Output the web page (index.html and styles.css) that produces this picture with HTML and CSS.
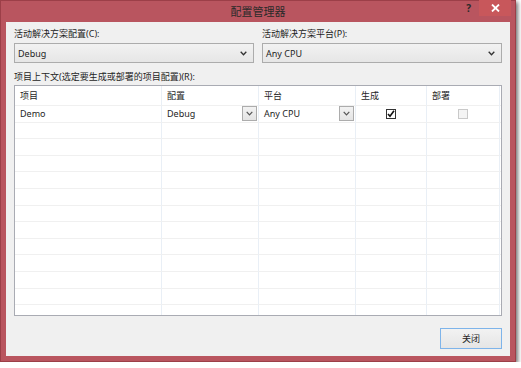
FILE: index.html
```html
<!DOCTYPE html>
<html lang="zh-CN">
<head>
    <meta charset="UTF-8">
    <title>配置管理器</title>
    <link rel="stylesheet" href="styles.css">
</head>
<body>
    <div class="window">
        <div class="titlebar">
            <span></span>
            <span class="title">配置管理器</span>
            <div class="caption-buttons">
                <span class="help">?</span>
                <span class="close">
                    <svg width="9" height="8" viewBox="0 0 9 8"><path d="M1 0.5 L8 7.5 M8 0.5 L1 7.5" stroke="#fff" stroke-width="1.8"/></svg>
                </span>
            </div>
        </div>
        <div class="content">
            <div class="combos">
                <div class="field">
                    <label>活动解决方案配置(C):</label>
                    <div class="combo">
                        <span>Debug</span>
                        <svg class="chevron" width="7" height="5" viewBox="0 0 7 5"><path d="M0.7 0.8 L3.5 3.8 L6.3 0.8" fill="none" stroke="#333" stroke-width="1.3"/></svg>
                    </div>
                </div>
                <div class="field">
                    <label>活动解决方案平台(P):</label>
                    <div class="combo">
                        <span>Any CPU</span>
                        <svg class="chevron" width="7" height="5" viewBox="0 0 7 5"><path d="M0.7 0.8 L3.5 3.8 L6.3 0.8" fill="none" stroke="#333" stroke-width="1.3"/></svg>
                    </div>
                </div>
            </div>
            <div class="grid-label">项目上下文(选定要生成或部署的项目配置)(R):</div>
            <div class="grid" id="grid">
                <div class="cell head">项目</div>
                <div class="cell head">配置</div>
                <div class="cell head">平台</div>
                <div class="cell head">生成</div>
                <div class="cell head">部署</div>
                <div class="cell head last"></div>

                <div class="cell">Demo</div>
                <div class="cell drop">
                    <span>Debug</span>
                    <span class="drop-btn"><svg width="7" height="5" viewBox="0 0 7 5"><path d="M0.7 0.8 L3.5 3.8 L6.3 0.8" fill="none" stroke="#555" stroke-width="1.2"/></svg></span>
                </div>
                <div class="cell drop">
                    <span>Any CPU</span>
                    <span class="drop-btn"><svg width="7" height="5" viewBox="0 0 7 5"><path d="M0.7 0.8 L3.5 3.8 L6.3 0.8" fill="none" stroke="#555" stroke-width="1.2"/></svg></span>
                </div>
                <div class="cell center">
                    <span class="check checked"><svg width="8" height="8" viewBox="0 0 8 8"><path d="M1 4 L3 6.3 L7 0.8" fill="none" stroke="#111" stroke-width="1.6"/></svg></span>
                </div>
                <div class="cell center"><span class="check disabled"></span></div>
                <div class="cell last"></div>
            </div>
            <div class="footer">
                <button class="btn">关闭</button>
            </div>
        </div>
    </div>

    <script>
        // empty rows below the project row
        const grid = document.getElementById('grid');
        for (let r = 0; r < 12; r++) {
            for (let c = 0; c < 6; c++) {
                const cell = document.createElement('div');
                cell.className = c === 5 ? 'cell last' : 'cell';
                grid.appendChild(cell);
            }
        }
    </script>
</body>
</html>
```

FILE: styles.css
```css
body {
    margin: 0;
    background: #fff;
    font-family: 'Noto Sans', 'Noto Sans CJK SC', sans-serif;
    font-size: 9px;
    color: #1e1e1e;
}
.window {
    width: 516px;
    height: 362px;
    box-sizing: border-box;
    background-color: #b9555f;
    border: 1px solid #9c3f48;
    padding: 0 5px 5px;
    display: flex;
    flex-direction: column;
    box-shadow: 2px 2px 4px rgba(0, 0, 0, 0.55);
}
.titlebar {
    height: 21px;
    display: grid;
    grid-template-columns: 1fr auto 1fr;
    align-items: start;
}
.title {
    font-size: 11px;
    line-height: 21px;
    color: #2a2a2a;
}
.caption-buttons {
    display: flex;
    justify-content: flex-end;
    align-items: center;
    margin-right: -1px;
    margin-top: -1px;
}
.help {
    font-size: 10px;
    font-weight: 700;
    color: #2a2a2a;
    margin-right: 8px;
    line-height: 16px;
}
.close {
    width: 32px;
    height: 16px;
    background-color: #c8575b;
    display: flex;
    align-items: center;
    justify-content: center;
}
.content {
    flex: 1;
    background-color: #f0f0f0;
    padding: 6px 8px 0;
    display: flex;
    flex-direction: column;
}
.combos {
    display: grid;
    grid-template-columns: 1fr 1fr;
    gap: 8px;
}
.field label {
    display: block;
    line-height: 12px;
    margin-bottom: 3px;
}
.combo {
    height: 20px;
    box-sizing: border-box;
    border: 1px solid #acacac;
    background: linear-gradient(#f2f2f2, #e6e6e6);
    display: flex;
    align-items: center;
    justify-content: space-between;
    padding: 0 6px 0 3px;
}
.grid-label {
    line-height: 12px;
    margin: 8px 0 2px;
}
.grid {
    height: 231px;
    box-sizing: border-box;
    border: 1px solid #a9abb3;
    background-color: #fff;
    display: grid;
    grid-template-columns: 147px 97px 97px 71px 73px 1fr;
    grid-template-rows: 20px;
    grid-auto-rows: 16.6px;
    overflow: hidden;
}
.cell {
    box-sizing: border-box;
    border-right: 1px solid #e9eff6;
    border-bottom: 1px solid #f0f0f0;
    padding-left: 5px;
    display: flex;
    align-items: center;
    white-space: nowrap;
}
.cell.last {
    border-right: none;
}
.cell.drop {
    justify-content: space-between;
    padding-right: 1px;
}
.drop-btn {
    width: 15px;
    height: 15px;
    box-sizing: border-box;
    border: 1px solid #acacac;
    background: linear-gradient(#f2f2f2, #e4e4e4);
    display: flex;
    align-items: center;
    justify-content: center;
}
.cell.center {
    justify-content: center;
    padding-left: 0;
}
.check {
    width: 10px;
    height: 10px;
    box-sizing: border-box;
    display: flex;
    align-items: center;
    justify-content: center;
}
.check.checked {
    border: 1px solid #333;
    background-color: #fff;
}
.check.disabled {
    border: 1px solid #c9c9c9;
    background-color: #f4f4f4;
}
.footer {
    display: flex;
    justify-content: flex-end;
    margin-top: 12px;
}
.btn {
    width: 62px;
    height: 21px;
    border: 1px solid #7eb4ea;
    background: linear-gradient(#f2f2f2, #e5e5e5);
    font-family: inherit;
    font-size: 9px;
    color: #1e1e1e;
    padding: 0;
}
```
